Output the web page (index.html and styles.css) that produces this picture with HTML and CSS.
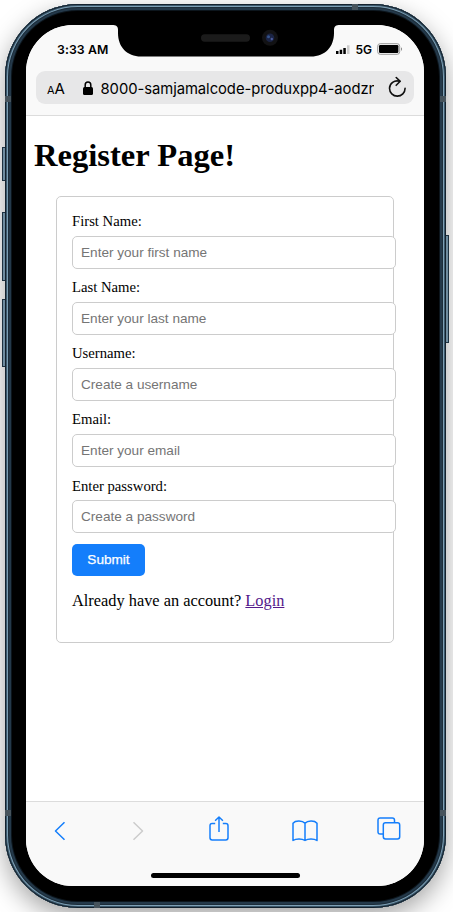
FILE: index.html
```html
<!DOCTYPE html>
<html lang="en">
<head>
<meta charset="utf-8">
<title>Register</title>
<link rel="stylesheet" href="styles.css">
</head>
<body>
<div class="phone">
  <i class="key key-mute"></i><i class="key key-up"></i><i class="key key-down"></i><i class="key key-power"></i>
  <i class="band band-left-top"></i><i class="band band-right-top"></i><i class="band band-left-bottom"></i><i class="band band-right-bottom"></i><i class="band band-top"></i><i class="band band-bottom"></i>
  <div class="screen">
    <svg class="notch" width="228" height="32" viewBox="0 0 228 32">
      <path d="M0 0C4 0 6 1 6 5V8C6 22 15 31.5 29 31.5H199C213 31.5 222 22 222 8V5C222 1 224 0 228 0Z"/>
      <rect x="89" y="9.3" width="49" height="7.4" rx="3.7" fill="#1b1b1b"/>
      <circle cx="158" cy="12.8" r="8" fill="#121214"/>
      <circle cx="158" cy="12.8" r="4.3" fill="#1b2445"/>
      <circle cx="156.5" cy="11.8" r="1.5" fill="#35548c"/>
      <circle cx="159.8" cy="14" r="1.2" fill="#4a5a9c"/>
    </svg>
    <header class="top">
      <div class="status">
        <span class="time">3:33 AM</span>
        <span class="signal">
          <svg class="bars" width="14" height="10" viewBox="0 0 14 10"><path d="M0 6h2.5v3H0zM3.7 4.8h2.5V9H3.7zM7.3 3h2.5v6H7.3z"/><path d="M11 .3h2.5V9H11z" fill="#ccc"/></svg>
          <b>5G</b>
          <svg width="26" height="12" viewBox="0 0 26 12"><rect x=".7" y=".7" width="22" height="10.6" rx="2.5" fill="none" stroke="#999"/><rect x="2" y="2" width="19.4" height="8" rx="1.2"/><path d="M24 4.2c1.4.4 1.4 3.2 0 3.6z" fill="#888"/></svg>
        </span>
      </div>
      <div class="address">
        <span class="aa"><small>A</small>A</span>
        <svg class="lock" width="10" height="14" viewBox="0 0 10 14"><rect y="6" width="10" height="8" rx="1.5"/><path d="M2.2 7V4C2.2 0 7.8 0 7.8 4V7" fill="none" stroke="#000" stroke-width="1.5"/></svg>
        <span class="url">8000-samjamalcode-produxpp4-aodzn</span>
        <svg class="reload" width="19" height="22" viewBox="0 0 19 22" fill="none" stroke="#111" stroke-width="1.6" stroke-linecap="round" stroke-linejoin="round"><path d="M11.6 5.2C6.4 3.7 1.5 7.3 1.5 12.3a7.8 7.8 0 0 0 15.6 0"/><path d="M8.2 1.5l4 3.8-4 4"/></svg>
      </div>
    </header>
    <main>
      <h1>Register Page!</h1>
      <form class="card">
        <label for="first">First Name:</label>
        <input id="first" type="text" placeholder="Enter your first name">
        <label for="last">Last Name:</label>
        <input id="last" type="text" placeholder="Enter your last name">
        <label for="user">Username:</label>
        <input id="user" type="text" placeholder="Create a username">
        <label for="email">Email:</label>
        <input id="email" type="email" placeholder="Enter your email">
        <label for="pass">Enter password:</label>
        <input id="pass" type="password" placeholder="Create a password">
        <button type="button">Submit</button>
        <p>Already have an account? <a href="#">Login</a></p>
      </form>
    </main>
    <footer class="toolbar">
      <nav>
        <svg width="12" height="20" viewBox="0 0 12 20"><path d="M10.5 1.3L1.5 10l9 8.7"/></svg>
        <svg class="disabled" width="12" height="20" viewBox="0 0 12 20"><path d="M1.5 1.3l9 8.7-9 8.7"/></svg>
        <svg class="share" width="20" height="25" viewBox="0 0 20 25"><path d="M6.2 7.5H3.2C1.7 7.5 1 8.2 1 9.7v12c0 1.5.7 2.2 2.2 2.2h13.6c1.5 0 2.2-.7 2.2-2.2v-12c0-1.5-.7-2.2-2.2-2.2h-3M10 16V1.2M6.1 4.8L10 1l3.9 3.8"/></svg>
        <svg class="book" width="26" height="22" viewBox="0 0 26 22"><path d="M13 3.2C10.5.5 3.5.2 1 3.2v17.3c3-2 9-2 12 0 3-2 9-2 12 0V3.2C22.5.2 15.5.5 13 3.2zM13 3.2v17.3"/></svg>
        <svg class="tabs" width="24" height="23" viewBox="0 0 24 23"><path d="M6.3 17H3.2C1.7 17 1 16.3 1 14.8V3.2C1 1.7 1.7 1 3.2 1h12.1c1.5 0 2.2.7 2.2 2.2v2.4"/><rect x="6.3" y="5.8" width="16.4" height="16.2" rx="2.2"/></svg>
      </nav>
      <div class="home"></div>
    </footer>
  </div>
</div>
</body>
</html>
```
FILE: styles.css
```css
* { box-sizing: border-box; }
html, body { height: 100%; }
body {
  margin: 0;
  padding: 4px 7px 4px 5px;
  overflow: hidden;
  background: #fff;
}
.phone {
  position: relative;
  width: 441px;
  height: 904px;
  padding: 21px 22px 22px 21px;
  border-radius: 73px;
  background: #000;
  box-shadow:
    inset 0 0 0 1px #14222e,
    inset 0 0 0 2px #3c586b,
    inset 0 0 0 3px #7d9fb5,
    inset 0 0 0 4px #1c2d3a,
    inset 0 0 0 6px #24394a,
    inset 0 0 0 7px #0c151c,
    0 9px 26px rgba(0, 0, 0, .36);
}
.key {
  position: absolute;
  width: 3px;
  left: -3px;
  background: #6f8c9f;
  border: 1px solid #1d3140;
  border-right: 0;
}
.key-mute { top: 143px; height: 34px; }
.key-up { top: 208px; height: 69px; }
.key-down { top: 295px; height: 68px; }
.key-power {
  top: 231px;
  left: 441px;
  height: 108px;
  border-right: 1px solid #1d3140;
  border-left: 0;
}
.band { position: absolute; width: 6px; height: 6px; background: #46535c; }
.band-left-top { left: 0; top: 92px; }
.band-right-top { right: 0; top: 92px; }
.band-left-bottom { left: 0; top: 806px; }
.band-right-bottom { right: 0; top: 806px; }
.band-top { left: 347px; top: 0; }
.band-bottom { left: 89px; bottom: 0; }

.screen {
  position: relative;
  display: flex;
  flex-direction: column;
  height: 861px;
  overflow: hidden;
  border-radius: 47px;
  background: #fff;
}
.notch { position: absolute; top: 0; left: 86px; }
.top {
  height: 91px;
  padding: 14px 10px 0;
  border-bottom: 1px solid #dcdcdc;
  background: #f9f9f9;
  font-family: Inter, sans-serif;
}
.status {
  display: flex;
  justify-content: space-between;
  align-items: center;
  height: 20px;
  padding: 0 11px 0 21px;
}
.time { font-size: 12.3px; font-weight: 600; letter-spacing: .1px; }
.signal { display: flex; align-items: center; gap: 5px; }
.signal b { font-size: 12px; font-weight: 600; }
.bars { margin-top: 2px; }
.address {
  display: flex;
  align-items: center;
  height: 33px;
  margin-top: 12px;
  padding: 0 7px 0 11px;
  border-radius: 9px;
  background: #e7e7e8;
  font-size: 15px;
}
.aa { width: 36px; padding-top: 2px; }
.aa small { font-size: 11px; }
.lock { flex: none; margin-right: 7.5px; margin-top: 1px; }
.url {
  width: 273.5px;
  padding-top: 2px;
  overflow: hidden;
  white-space: nowrap;
  font-size: 14.8px;
  letter-spacing: -.05px;
}
.reload { flex: none; margin-left: 14px; margin-top: -2px; }

main {
  flex: 1;
  padding: 0 30px;
  font-family: "Liberation Serif", serif;
}
h1 {
  margin: 20px 0 0 -22px;
  font-size: 32.6px;
  line-height: 38px;
}
.card {
  width: 338px;
  height: 447px;
  margin-top: 22px;
  padding: 16px 15px 15px;
  border: 1px solid #ccc;
  border-radius: 5px;
}
label {
  display: block;
  height: 17px;
  margin-bottom: 5.5px;
  font-size: 14.7px;
  line-height: 17px;
}
input {
  display: block;
  width: 324px;
  height: 33.25px;
  margin: 0 0 10.4px;
  padding: 0 8px;
  border: 1px solid #ccc;
  border-radius: 5px;
  background: #fff;
  font: 13.6px "Liberation Sans", sans-serif;
}
input::placeholder { color: #757575; }
button {
  display: block;
  width: 73px;
  height: 32px;
  padding: 0;
  border: 0;
  border-radius: 5px;
  background: #147efb;
  color: #fff;
  font: 13.6px "Liberation Sans", sans-serif;
  -webkit-text-stroke: .25px #fff;
}
.card p { margin: 15px 0 0; font-size: 16.35px; line-height: 19px; }
a { color: #551a8b; }

.toolbar {
  height: 85px;
  padding-top: 14px;
  border-top: 1px solid #dcdcdc;
  background: #f9f9f9;
}
nav {
  display: flex;
  align-items: center;
  height: 30px;
  padding-left: 28px;
}
nav svg { flex: none; fill: none; stroke: #147efb; stroke-width: 1.5; stroke-linejoin: round; }
nav .disabled { margin-left: 66px; stroke: #ccc; }
.share { margin: -5px 0 0 65px; }
.book { margin: -1px 0 0 62.5px; }
.tabs { margin: -5px 0 0 59px; }
.home {
  width: 149px;
  height: 5px;
  margin: 27px auto 0;
  border-radius: 3px;
  background: #000;
}
```
